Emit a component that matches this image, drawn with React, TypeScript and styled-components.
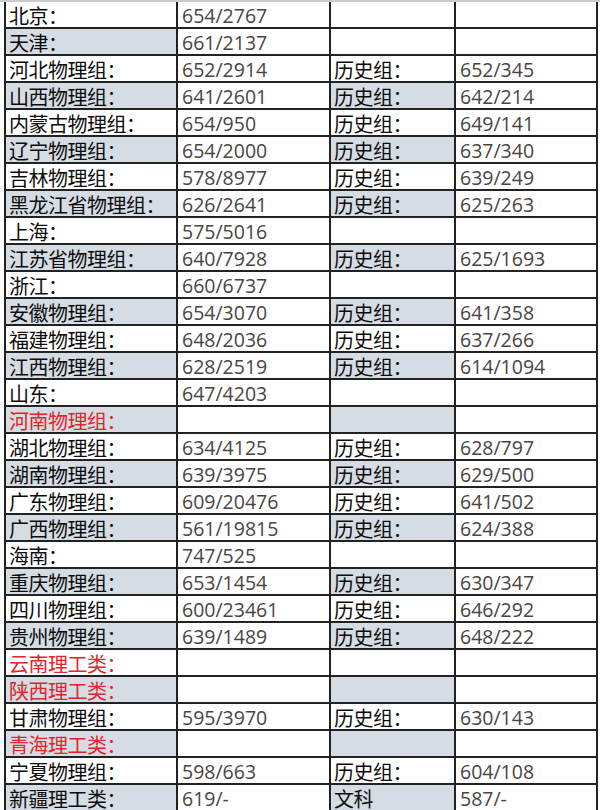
import React from 'react';
import styled, { createGlobalStyle } from 'styled-components';

type RowType = {
    name: string
    score: string
    name2?: string
    score2?: string
    red?: boolean
}

const rows: RowType[] = [
    { name: '北京：', score: '654/2767' },
    { name: '天津：', score: '661/2137' },
    { name: '河北物理组：', score: '652/2914', name2: '历史组：', score2: '652/345' },
    { name: '山西物理组：', score: '641/2601', name2: '历史组：', score2: '642/214' },
    { name: '内蒙古物理组：', score: '654/950', name2: '历史组：', score2: '649/141' },
    { name: '辽宁物理组：', score: '654/2000', name2: '历史组：', score2: '637/340' },
    { name: '吉林物理组：', score: '578/8977', name2: '历史组：', score2: '639/249' },
    { name: '黑龙江省物理组：', score: '626/2641', name2: '历史组：', score2: '625/263' },
    { name: '上海：', score: '575/5016' },
    { name: '江苏省物理组：', score: '640/7928', name2: '历史组：', score2: '625/1693' },
    { name: '浙江：', score: '660/6737' },
    { name: '安徽物理组：', score: '654/3070', name2: '历史组：', score2: '641/358' },
    { name: '福建物理组：', score: '648/2036', name2: '历史组：', score2: '637/266' },
    { name: '江西物理组：', score: '628/2519', name2: '历史组：', score2: '614/1094' },
    { name: '山东：', score: '647/4203' },
    { name: '河南物理组：', score: '', red: true },
    { name: '湖北物理组：', score: '634/4125', name2: '历史组：', score2: '628/797' },
    { name: '湖南物理组：', score: '639/3975', name2: '历史组：', score2: '629/500' },
    { name: '广东物理组：', score: '609/20476', name2: '历史组：', score2: '641/502' },
    { name: '广西物理组：', score: '561/19815', name2: '历史组：', score2: '624/388' },
    { name: '海南：', score: '747/525' },
    { name: '重庆物理组：', score: '653/1454', name2: '历史组：', score2: '630/347' },
    { name: '四川物理组：', score: '600/23461', name2: '历史组：', score2: '646/292' },
    { name: '贵州物理组：', score: '639/1489', name2: '历史组：', score2: '648/222' },
    { name: '云南理工类：', score: '', red: true },
    { name: '陕西理工类：', score: '', red: true },
    { name: '甘肃物理组：', score: '595/3970', name2: '历史组：', score2: '630/143' },
    { name: '青海理工类：', score: '', red: true },
    { name: '宁夏物理组：', score: '598/663', name2: '历史组：', score2: '604/108' },
    { name: '新疆理工类：', score: '619/-', name2: '文科', score2: '587/-' },
];

const GlobalStyle = createGlobalStyle`
  body {
    margin: 0;
    background: #fff;
    font-family: "Noto Sans CJK SC", "Noto Sans", sans-serif;
  }
`

export default function App() {
    return (
        <>
            <GlobalStyle />
            <Sheet>
                {rows.map((r, i) => {
                    const even = i % 2 === 1;
                    return (
                        <Row key={r.name}>
                            <Label shaded={even} red={r.red}>{r.name}</Label>
                            <Score>{r.score}</Score>
                            <Label shaded={even && i !== 1}>{r.name2}</Label>
                            <Score>{r.score2}</Score>
                        </Row>
                    );
                })}
            </Sheet>
        </>
    );
}

const Sheet = styled.div`
  border-top: 2px solid #cbcbcb;
  padding-left: 4px;
`
const Row = styled.div`
  display: grid;
  grid-template-columns: 174px 153px 125px 142px;
  height: 27px;
`
const Cell = styled.div`
  display: flex;
  align-items: flex-end;
  border-right: 2px solid #222;
  border-bottom: 2px solid #222;
  padding-left: 3px;
  line-height: 22px;
  white-space: nowrap;
  overflow: hidden;
  &:first-child {
    border-left: 2px solid #222;
  }
`
const Label = styled(Cell)<{ shaded?: boolean; red?: boolean }>`
  background: ${p => (p.shaded ? '#d6dce4' : '#fff')};
  color: ${p => (p.red ? '#e0252b' : '#0c0c0c')};
  font-size: 20px;
  letter-spacing: -0.5px;
`
const Score = styled(Cell)`
  color: #4a4542;
  padding-left: 4px;
  font-family: "Open Sans", "Noto Sans", sans-serif;
  font-size: 19.5px;
`
